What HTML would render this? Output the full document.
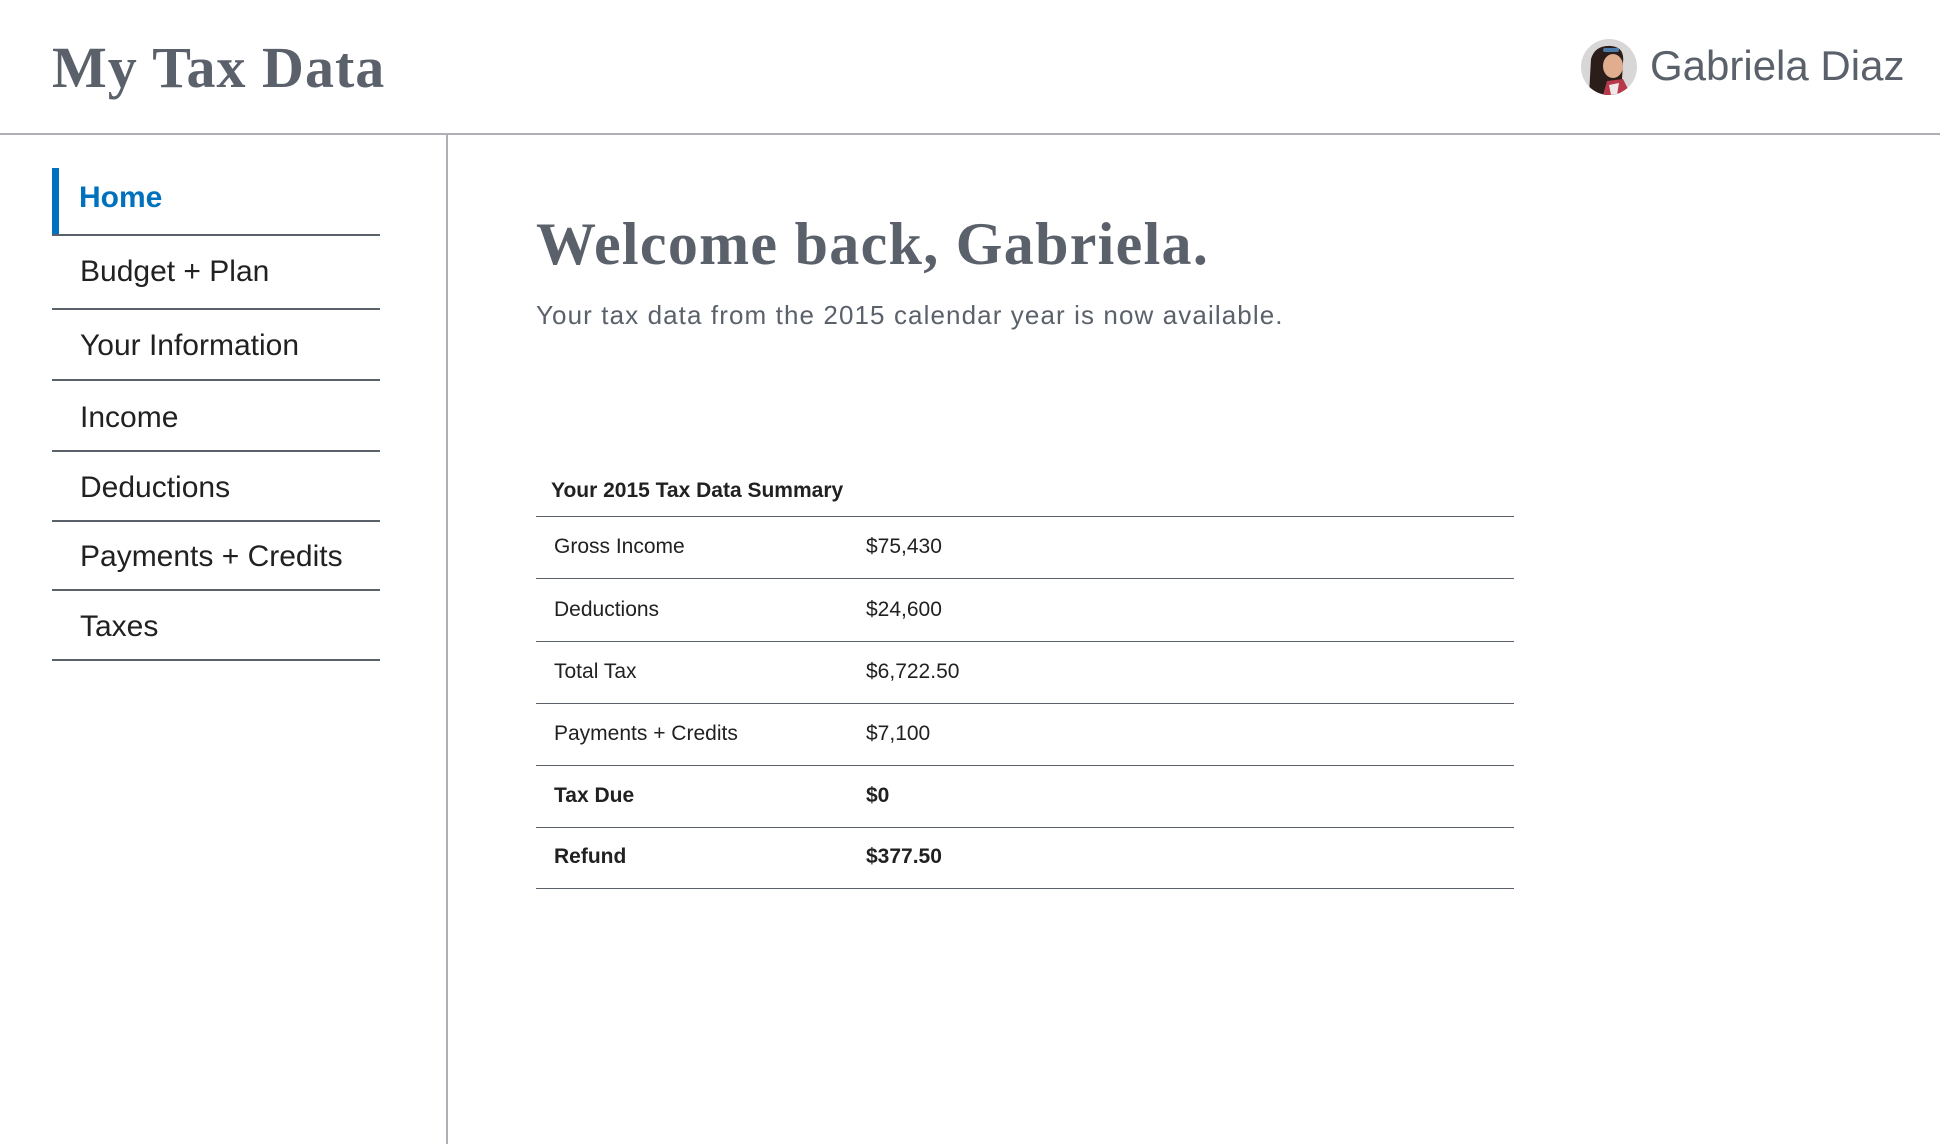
<!DOCTYPE html>
<html><head><meta charset="utf-8"><style>
body{margin:0;width:1940px;height:1144px;background:#fff;position:relative;overflow:hidden;font-family:"Liberation Sans",sans-serif;color:#212121}
.a{position:absolute}
.serif{font-family:"Liberation Serif",serif;font-weight:bold;color:#5b616b}
.nav{position:absolute;left:52px;width:328px;border-bottom:2px solid #5b616b;font-size:30px;color:#212121;box-sizing:border-box}
.row{position:absolute;left:536px;width:978px;border-bottom:1.5px solid #5b616b;font-size:21px}
.row span{position:absolute;bottom:19px}
</style></head><body>
<div class="a serif" style="left:52px;top:34px;font-size:58px;letter-spacing:1px">My Tax Data</div>
<svg class="a" style="left:1581px;top:39px" width="56" height="56" viewBox="0 0 56 56">
<defs><clipPath id="c"><circle cx="28" cy="28" r="28"/></clipPath></defs>
<g clip-path="url(#c)"><rect width="56" height="56" fill="#d9d6d8"/>
<path d="M8 56 L10 20 Q14 6 30 7 Q44 8 42 24 L40 56Z" fill="#2a1d1a"/>
<ellipse cx="32" cy="27" rx="10" ry="12" fill="#e0ad8f"/>
<path d="M22 56 L26 42 L42 40 L50 56Z" fill="#b8394a"/>
<path d="M28 46 L38 44 L36 56 L30 56Z" fill="#f0e8e8"/>
<rect x="22" y="9" width="16" height="4" rx="2" fill="#4a7aa8"/></g></svg>
<div class="a" style="left:1650px;top:42px;font-size:42px;color:#5b616b">Gabriela Diaz</div>
<div class="a" style="left:0;top:133px;width:1940px;height:2px;background:#aeb0b5"></div>
<div class="a" style="left:446px;top:134px;width:2px;height:1010px;background:#aeb0b5"></div>
<div class="a" style="left:52px;top:168px;width:7px;height:66px;background:#0071bc"></div>
<div class="nav" style="top:168px;height:68px"><span class="a" style="left:27px;top:13px;color:#0071bc;font-weight:bold">Home</span></div>
<div class="nav" style="top:236px;height:74px"><span class="a" style="left:28px;top:19px">Budget + Plan</span></div>
<div class="nav" style="top:310px;height:71px"><span class="a" style="left:28px;top:19px">Your Information</span></div>
<div class="nav" style="top:381px;height:71px"><span class="a" style="left:28px;top:20px">Income</span></div>
<div class="nav" style="top:452px;height:70px"><span class="a" style="left:28px;top:19px">Deductions</span></div>
<div class="nav" style="top:522px;height:69px"><span class="a" style="left:28px;top:18px">Payments + Credits</span></div>
<div class="nav" style="top:591px;height:70px"><span class="a" style="left:28px;top:19px">Taxes</span></div>
<div class="a serif" style="left:536px;top:210px;font-size:60px;letter-spacing:1.3px">Welcome back, Gabriela.</div>
<div class="a" style="left:536px;top:300px;font-size:26px;color:#5b616b;letter-spacing:1.1px">Your tax data from the 2015 calendar year is now available.</div>
<div class="row" style="top:460px;height:56px"><span style="left:15px;font-weight:bold;bottom:13px">Your 2015 Tax Data Summary</span></div>
<div class="row" style="top:516px;height:62px"><span style="left:18px">Gross Income</span><span style="left:330px">$75,430</span></div>
<div class="row" style="top:578px;height:63px"><span style="left:18px">Deductions</span><span style="left:330px">$24,600</span></div>
<div class="row" style="top:641px;height:62px"><span style="left:18px">Total Tax</span><span style="left:330px">$6,722.50</span></div>
<div class="row" style="top:703px;height:62px"><span style="left:18px">Payments + Credits</span><span style="left:330px">$7,100</span></div>
<div class="row" style="top:765px;height:62px;font-weight:bold"><span style="left:18px">Tax Due</span><span style="left:330px">$0</span></div>
<div class="row" style="top:827px;height:61px;font-weight:bold"><span style="left:18px">Refund</span><span style="left:330px">$377.50</span></div>
</body></html>
